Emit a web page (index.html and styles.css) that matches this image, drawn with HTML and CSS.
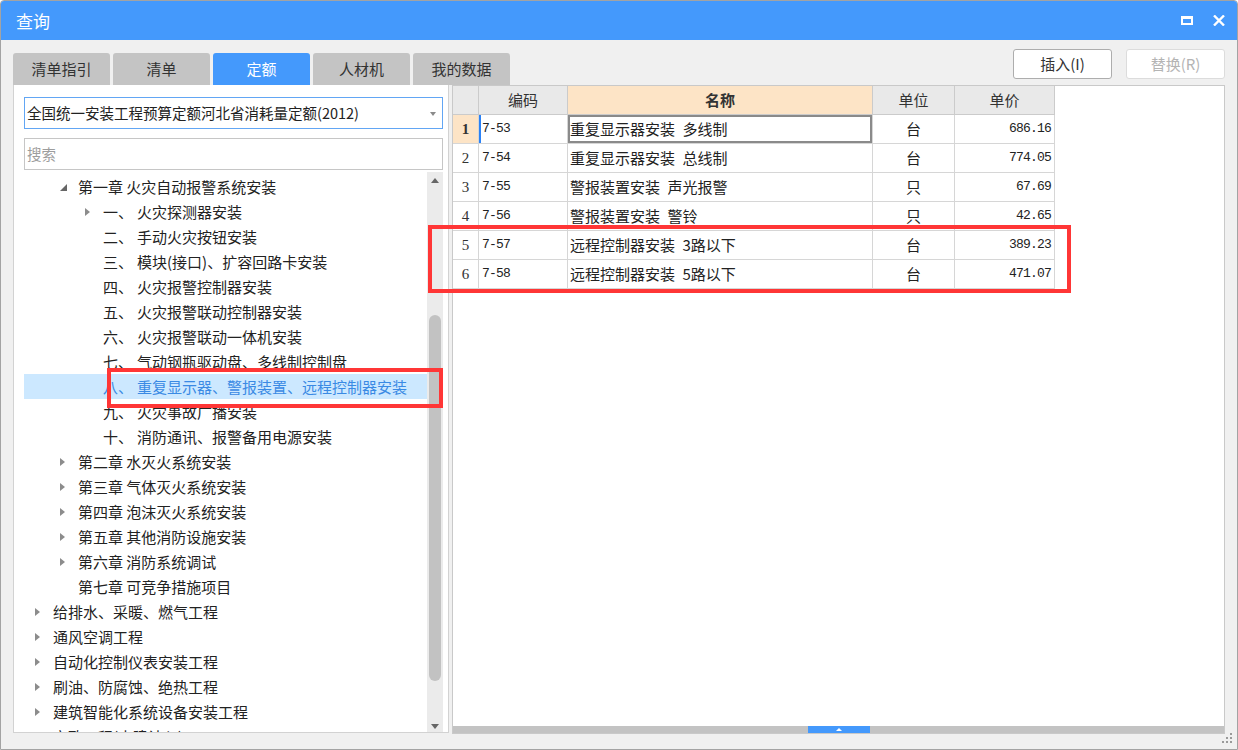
FILE: index.html
```html
<html>
<head>
<meta charset="utf-8">
<link rel="stylesheet" href="styles.css">
</head>
<body>
<div class="window">
  <div class="titlebar">
    <span class="title">查询</span>
    <div class="title-actions">
      <span class="btn-max"></span>
      <svg class="btn-close" width="12" height="11" viewBox="0 0 12 11">
        <path d="M1 0.5 L11 10.5 M11 0.5 L1 10.5" stroke="#fff" stroke-width="2.4" fill="none" />
      </svg>
    </div>
  </div>

  <div class="body">
    <div class="topbar">
      <div class="tabs">
        <div class="tab">清单指引</div>
        <div class="tab">清单</div>
        <div class="tab active">定额</div>
        <div class="tab">人材机</div>
        <div class="tab">我的数据</div>
      </div>
      <div class="actions">
        <div class="btn">插入(I)</div>
        <div class="btn disabled">替换(R)</div>
      </div>
    </div>

    <div class="main">
      <div class="left-panel">
        <div class="select">全国统一安装工程预算定额河北省消耗量定额(2012)<span class="caret"></span></div>
        <div class="search">搜索</div>
        <div class="tree-wrap">
          <div class="tree">
            <div class="row lvl1"><span class="arrow"><i class="tri-open"></i></span>第一章 火灾自动报警系统安装</div>
            <div class="row lvl2"><span class="arrow"><i class="tri"></i></span><span class="num">一、</span>火灾探测器安装</div>
            <div class="row lvl2"><span class="arrow"></span><span class="num">二、</span>手动火灾按钮安装</div>
            <div class="row lvl2"><span class="arrow"></span><span class="num">三、</span>模块(接口)、扩容回路卡安装</div>
            <div class="row lvl2"><span class="arrow"></span><span class="num">四、</span>火灾报警控制器安装</div>
            <div class="row lvl2"><span class="arrow"></span><span class="num">五、</span>火灾报警联动控制器安装</div>
            <div class="row lvl2"><span class="arrow"></span><span class="num">六、</span>火灾报警联动一体机安装</div>
            <div class="row lvl2"><span class="arrow"></span><span class="num">七、</span>气动钢瓶驱动盘、多线制控制盘</div>
            <div class="row lvl2 selected"><span class="arrow"></span><span class="num">八、</span>重复显示器、警报装置、远程控制器安装</div>
            <div class="row lvl2"><span class="arrow"></span><span class="num">九、</span>火灾事故广播安装</div>
            <div class="row lvl2"><span class="arrow"></span><span class="num">十、</span>消防通讯、报警备用电源安装</div>
            <div class="row lvl1"><span class="arrow"><i class="tri"></i></span>第二章 水灭火系统安装</div>
            <div class="row lvl1"><span class="arrow"><i class="tri"></i></span>第三章 气体灭火系统安装</div>
            <div class="row lvl1"><span class="arrow"><i class="tri"></i></span>第四章 泡沫灭火系统安装</div>
            <div class="row lvl1"><span class="arrow"><i class="tri"></i></span>第五章 其他消防设施安装</div>
            <div class="row lvl1"><span class="arrow"><i class="tri"></i></span>第六章 消防系统调试</div>
            <div class="row lvl1"><span class="arrow"></span>第七章 可竞争措施项目</div>
            <div class="row lvl0"><span class="arrow"><i class="tri"></i></span>给排水、采暖、燃气工程</div>
            <div class="row lvl0"><span class="arrow"><i class="tri"></i></span>通风空调工程</div>
            <div class="row lvl0"><span class="arrow"><i class="tri"></i></span>自动化控制仪表安装工程</div>
            <div class="row lvl0"><span class="arrow"><i class="tri"></i></span>刷油、防腐蚀、绝热工程</div>
            <div class="row lvl0"><span class="arrow"><i class="tri"></i></span>建筑智能化系统设备安装工程</div>
            <div class="row lvl0"><span class="arrow"><i class="tri"></i></span>市政工程(土建计入)</div>
          </div>
          <div class="vscroll">
            <div class="sb-up"><i></i></div>
            <div class="sb-gap"></div>
            <div class="sb-thumb"></div>
            <div class="sb-fill"></div>
            <div class="sb-down"><i></i></div>
          </div>
        </div>
      </div>

      <div class="right-panel">
        <div class="grid-wrap">
          <div class="grid">
            <div class="hd rn"></div>
            <div class="hd">编码</div>
            <div class="hd name">名称</div>
            <div class="hd">单位</div>
            <div class="hd">单价</div>

            <div class="rn current">1</div>
            <div class="code focus">7-53</div>
            <div class="txt cell-sel">重复显示器安装&ensp;多线制</div>
            <div class="unit">台</div>
            <div class="price">686.16</div>

            <div class="rn">2</div>
            <div class="code">7-54</div>
            <div class="txt">重复显示器安装&ensp;总线制</div>
            <div class="unit">台</div>
            <div class="price">774.05</div>

            <div class="rn">3</div>
            <div class="code">7-55</div>
            <div class="txt">警报装置安装&ensp;声光报警</div>
            <div class="unit">只</div>
            <div class="price">67.69</div>

            <div class="rn">4</div>
            <div class="code">7-56</div>
            <div class="txt">警报装置安装&ensp;警铃</div>
            <div class="unit">只</div>
            <div class="price">42.65</div>

            <div class="rn">5</div>
            <div class="code">7-57</div>
            <div class="txt">远程控制器安装&ensp;3路以下</div>
            <div class="unit">台</div>
            <div class="price">389.23</div>

            <div class="rn">6</div>
            <div class="code">7-58</div>
            <div class="txt">远程控制器安装&ensp;5路以下</div>
            <div class="unit">台</div>
            <div class="price">471.07</div>
          </div>
        </div>
        <div class="hscroll"><span class="hthumb"><i></i></span></div>
      </div>
    </div>
  </div>

  <div class="mark mark-tree"></div>
  <div class="mark mark-grid"></div>

  <svg class="grip" width="11" height="11" viewBox="0 0 11 11">
    <rect x="8" y="0" width="2" height="2" fill="#9a9a9a" />
    <rect x="4" y="4" width="2" height="2" fill="#9a9a9a" />
    <rect x="8" y="4" width="2" height="2" fill="#9a9a9a" />
    <rect x="0" y="8" width="2" height="2" fill="#9a9a9a" />
    <rect x="4" y="8" width="2" height="2" fill="#9a9a9a" />
    <rect x="8" y="8" width="2" height="2" fill="#9a9a9a" />
  </svg>
</div>
</body>
</html>
```

FILE: styles.css
```css
* {
  box-sizing: border-box;
  margin: 0;
  padding: 0;
}

body {
  background: #ffffff;
  font-family: "Noto Sans CJK SC", "Noto Sans", sans-serif;
  color: #222;
}

.window {
  position: relative;
  width: 1238px;
  height: 750px;
  border: 1px solid #a3a3a3;
  border-radius: 4px 4px 0 0;
  background: #f0f0f0;
  display: flex;
  flex-direction: column;
  overflow: hidden;
}

/* title bar */
.titlebar {
  height: 39px;
  flex: none;
  background: #4499fc;
  display: flex;
  align-items: center;
  padding: 0 12px 0 15px;
  color: #fff;
}

.title {
  font-size: 17px;
  line-height: 20px;
}

.title-actions {
  margin-left: auto;
  display: flex;
  align-items: center;
  gap: 20px;
}

.btn-max {
  display: block;
  width: 12px;
  height: 9px;
  border: 2px solid #fff;
  border-top-width: 3px;
}

.btn-close {
  display: block;
}

/* body */
.body {
  flex: 1;
  display: flex;
  flex-direction: column;
  padding: 0 12px 15px 12px;
  min-height: 0;
}

.topbar {
  height: 45px;
  flex: none;
  display: flex;
  padding-top: 9px;
}

.tabs {
  display: flex;
  gap: 3px;
  align-self: flex-end;
}

.tab {
  width: 97px;
  height: 32px;
  border-radius: 3px 3px 0 0;
  background: #c4c4c4;
  color: #333;
  font-size: 15px;
  line-height: 32px;
  text-align: center;
}

.tab.active {
  background: #4499fc;
  color: #fff;
}

.actions {
  margin-left: auto;
  display: flex;
  gap: 14px;
}

.btn {
  width: 99px;
  height: 30px;
  border: 1px solid #adadad;
  border-radius: 3px;
  background: #fff;
  color: #333;
  font-size: 15px;
  line-height: 28px;
  text-align: center;
}

.btn.disabled {
  border-color: #dcdcdc;
  color: #b4b4b4;
}

/* panels */
.main {
  flex: 1;
  display: flex;
  gap: 3px;
  min-height: 0;
}

.left-panel {
  width: 436px;
  height: 648px;
  background: #fff;
  border: 1px solid #d2d2d2;
  border-top: none;
  padding: 12px 5px 0 10px;
  display: flex;
  flex-direction: column;
}

.select {
  position: relative;
  height: 32px;
  border: 1px solid #62a6f4;
  font-size: 14.5px;
  line-height: 30px;
  padding-left: 2px;
  color: #222;
}

.caret {
  position: absolute;
  right: 6px;
  top: 14px;
  width: 0;
  height: 0;
  border-left: 3.5px solid transparent;
  border-right: 3.5px solid transparent;
  border-top: 4px solid #8a8a8a;
}

.search {
  height: 32px;
  margin-top: 9px;
  border: 1px solid #c6c6c6;
  font-size: 14.5px;
  line-height: 30px;
  padding-left: 2px;
  color: #9d9d9d;
}

.tree-wrap {
  flex: 1;
  display: flex;
  margin-top: 2px;
  min-height: 0;
}

.tree {
  flex: 1;
  overflow: hidden;
  padding-top: 2px;
}

.row {
  height: 25px;
  display: flex;
  align-items: center;
  font-size: 15px;
  line-height: 25px;
  white-space: nowrap;
  color: #222;
}

.row.lvl0 { padding-left: 8px; }
.row.lvl1 { padding-left: 33px; }
.row.lvl2 { padding-left: 58px; }

.row.selected {
  background: #cce8ff;
  color: #3a8ae4;
}

.arrow {
  width: 21px;
  height: 25px;
  flex: none;
  display: flex;
  align-items: center;
  padding-left: 3px;
}

.num {
  margin-right: 4px;
}

.tri {
  display: block;
  width: 0;
  height: 0;
  border-top: 4.5px solid transparent;
  border-bottom: 4.5px solid transparent;
  border-left: 5px solid #8c8c8c;
}

.tri-open {
  display: block;
  width: 0;
  height: 0;
  margin-top: 2px;
  border-left: 7px solid transparent;
  border-bottom: 7px solid #666;
}

/* tree scrollbar */
.vscroll {
  width: 16px;
  flex: none;
  background: #ebebeb;
  display: flex;
  flex-direction: column;
  align-items: center;
}

.sb-up, .sb-down {
  height: 16px;
  width: 16px;
  display: flex;
  align-items: center;
  justify-content: center;
}

.sb-up i {
  border-left: 4.5px solid transparent;
  border-right: 4.5px solid transparent;
  border-bottom: 5px solid #666;
}

.sb-down {
  height: 12px;
}

.sb-down i {
  border-left: 4.5px solid transparent;
  border-right: 4.5px solid transparent;
  border-top: 5px solid #666;
}

.sb-gap {
  height: 127px;
}

.sb-thumb {
  width: 12px;
  height: 366px;
  border-radius: 6px;
  background: #c2c2c2;
}

.sb-fill {
  flex: 1;
}

/* grid panel */
.right-panel {
  width: 773px;
  height: 649px;
  background: #fff;
  border: 1px solid #c9c9c9;
  display: flex;
  flex-direction: column;
}

.grid-wrap {
  flex: 1;
  min-height: 0;
}

.grid {
  display: grid;
  grid-template-columns: 26px 89px 305px 82px 100px;
  grid-auto-rows: 29px;
  width: 602px;
  font-size: 15px;
}

.grid > div {
  border-right: 1px solid #d6d6d6;
  border-bottom: 1px solid #d6d6d6;
  line-height: 28px;
  white-space: nowrap;
  overflow: hidden;
}

.grid .hd {
  background: #e9e9e9;
  border-color: #cbcbcb;
  text-align: center;
  color: #333;
  line-height: 27px;
}

.grid .hd.name {
  background: #fde4c6;
  font-weight: bold;
}

.grid .rn {
  text-align: center;
  font-family: "Liberation Serif", serif;
  font-size: 15px;
  color: #333;
}

.grid .rn.current {
  background: #fde4c6;
  font-weight: bold;
}

.grid .code {
  font-family: "Liberation Mono", monospace;
  font-size: 13px;
  letter-spacing: -0.8px;
  padding-left: 3px;
}

.grid .code.focus {
  box-shadow: inset 2px 0 0 #2b82f6;
}

.grid .txt {
  padding-left: 2px;
}

.grid .cell-sel {
  box-shadow: inset 0 0 0 2px #8a8a8a;
}

.grid .unit {
  text-align: center;
}

.grid .price {
  text-align: right;
  padding-right: 3px;
  font-family: "Liberation Mono", monospace;
  font-size: 13px;
  letter-spacing: -0.8px;
}

.hscroll {
  height: 7px;
  flex: none;
  background: #c3c3c3;
  padding-left: 355px;
}

.hthumb {
  display: flex;
  align-items: center;
  justify-content: center;
  width: 62px;
  height: 7px;
  background: #4499fc;
}

.hthumb i {
  border-left: 3px solid transparent;
  border-right: 3px solid transparent;
  border-bottom: 3px solid #fff;
}

/* annotation boxes drawn over the window */
.mark {
  position: absolute;
  border: 4px solid #ff3636;
}

.mark-tree {
  left: 106px;
  top: 367px;
  width: 336px;
  height: 40px;
}

.mark-grid {
  left: 427px;
  top: 224px;
  width: 643px;
  height: 68px;
}

.grip {
  position: absolute;
  right: 4px;
  bottom: 5px;
}
```
